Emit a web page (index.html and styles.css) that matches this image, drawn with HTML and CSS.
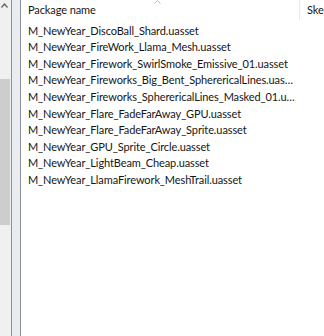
FILE: index.html
```html
<!DOCTYPE html>
<html lang="en">
<head>
  <meta charset="UTF-8">
  <title>Package list</title>
  <link rel="stylesheet" href="styles.css">
</head>
<body>

  <div class="frame">
    <div class="scroll">
      <svg class="arrow" width="7" height="5" viewBox="0 0 7 5">
        <path d="M0.5 4.5 L3.5 1 L6.5 4.5" fill="none" stroke="#606060" stroke-width="1.2"/>
      </svg>
      <div class="thumb"></div>
    </div>
    <div class="splitter"></div>

    <div class="list">
      <div class="row head">
        <div class="cell name">Package name</div>
        <div class="cell side">Ske</div>
        <svg class="sort" width="7" height="4" viewBox="0 0 7 4">
          <path d="M0.5 3.5 L3.5 0.5 L6.5 3.5" fill="none" stroke="#b8bcc2" stroke-width="1"/>
        </svg>
      </div>

      <div class="rows">
        <div class="row"><div class="cell name">M_NewYear_DiscoBall_Shard.uasset</div></div>
        <div class="row"><div class="cell name">M_NewYear_FireWork_Llama_Mesh.uasset</div></div>
        <div class="row"><div class="cell name">M_NewYear_Firework_SwirlSmoke_Emissive_01.uasset</div></div>
        <div class="row"><div class="cell name">M_NewYear_Fireworks_Big_Bent_SpherericalLines.uasset</div></div>
        <div class="row"><div class="cell name">M_NewYear_Fireworks_SpherericalLines_Masked_01.uasset</div></div>
        <div class="row"><div class="cell name">M_NewYear_Flare_FadeFarAway_GPU.uasset</div></div>
        <div class="row"><div class="cell name">M_NewYear_Flare_FadeFarAway_Sprite.uasset</div></div>
        <div class="row"><div class="cell name">M_NewYear_GPU_Sprite_Circle.uasset</div></div>
        <div class="row"><div class="cell name">M_NewYear_LightBeam_Cheap.uasset</div></div>
        <div class="row"><div class="cell name">M_NewYear_LlamaFirework_MeshTrail.uasset</div></div>
      </div>
    </div>
  </div>

</body>
</html>
```

FILE: styles.css
```css
body {
  margin: 0;
  font-family: Lato, "Liberation Sans", sans-serif;
  font-size: 11px;
  letter-spacing: -0.1px;
  color: #151515;
  background: #ffffff;
}
.frame {
  display: flex;
  height: 336px;
  overflow: hidden;
}
.scroll {
  width: 11px;
  background: #f0f0f0;
  display: flex;
  flex-direction: column;
}
.arrow {
  margin: 3px 0 0 1px;
}
.thumb {
  margin-top: 71px;
  width: 10px;
  height: 146px;
  background: #cdcdcd;
}
.splitter {
  width: 8px;
  background: #e9edf2;
  border-left: 1px solid #8e9298;
  border-right: 1px solid #8e9298;
}
.list {
  flex: 1;
  position: relative;
  background: #ffffff;
  min-width: 0;
}
.row {
  display: grid;
  grid-template-columns: 278px 1fr;
  height: 16.6px;
  line-height: 16.6px;
}
.head {
  height: 20px;
  line-height: 20px;
}
.head .side {
  border-left: 1px solid #e6e9ee;
  text-overflow: clip;
}
.rows {
  padding-top: 2.7px;
}
.cell {
  padding-left: 7px;
  white-space: nowrap;
  overflow: hidden;
  text-overflow: ellipsis;
}
.name {
  padding-right: 2px;
}
.sort {
  position: absolute;
  left: 133px;
  top: 0;
}
```
